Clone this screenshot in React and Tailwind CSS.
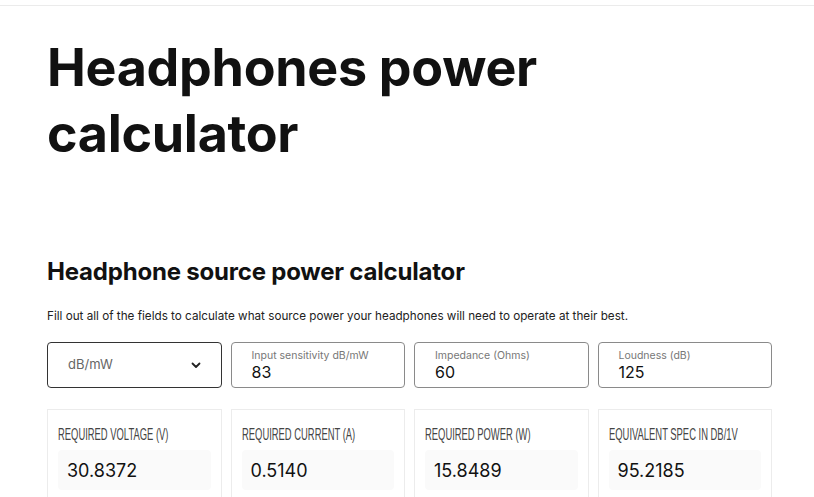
import React from "react";

const inputs = [
  { label: "Input sensitivity dB/mW", value: "83" },
  { label: "Impedance (Ohms)", value: "60" },
  { label: "Loudness (dB)", value: "125" },
];

const results = [
  { label: "REQUIRED VOLTAGE (V)", value: "30.8372" },
  { label: "REQUIRED CURRENT (A)", value: "0.5140" },
  { label: "REQUIRED POWER (W)", value: "15.8489" },
  { label: "EQUIVALENT SPEC IN DB/1V", value: "95.2185" },
];

export default function App() {
  return (
    <div className="min-h-[497px] bg-white text-[#111] font-['Inter','Noto_Sans',sans-serif]">
      <div className="h-[5px]" />
      <div className="border-t border-[#ebebeb]" />
      <div className="px-[47px] pr-[42px]">
        <h1 className="mt-[29px] text-[52px] leading-[66px] font-bold tracking-[-0.3px] text-[#111]">
          Headphones power
          <br />
          calculator
        </h1>
        <h2 className="mt-[90px] text-[24px] leading-[30px] font-bold text-[#111] tracking-[-0.2px]">
          Headphone source power calculator
        </h2>
        <p className="mt-[21px] text-[11.7px] leading-[16px] text-[#222]">
          Fill out all of the fields to calculate what source power your headphones will need to operate at their best.
        </p>
        <div className="mt-[18px] grid grid-cols-4 gap-[9px]">
          <div className="h-[46px] rounded-[4px] border border-[#333] flex items-center justify-between pl-[20px] pr-[20px]">
            <span className="text-[13px] text-[#666]">dB/mW</span>
            <svg width="10" height="7" viewBox="0 0 10 7" fill="none">
              <path d="M1.5 1.5 L5 5 L8.5 1.5" stroke="#222" strokeWidth="1.8" strokeLinecap="round" strokeLinejoin="round" />
            </svg>
          </div>
          {inputs.map((f) => (
            <div key={f.label} className="h-[46px] rounded-[4px] border border-[#8a8a8a] pl-[20px] pt-[6px] flex flex-col">
              <span className="text-[10.5px] leading-[13px] text-[#777]">{f.label}</span>
              <span className="text-[16px] leading-[20px] text-[#111]">{f.value}</span>
            </div>
          ))}
        </div>
        <div className="mt-[21px] grid grid-cols-4 gap-[9px]">
          {results.map((r) => (
            <div key={r.label} className="h-[100px] border border-[#ececec] px-[10px] pt-[15px]">
              <div className="text-[16.5px] leading-[18px] text-[#444] whitespace-nowrap origin-left scale-x-[0.57] font-['Liberation_Sans','Arial',sans-serif]">
                {r.label}
              </div>
              <div className="mt-[7px] h-[40px] rounded-[4px] bg-[#fafafa] flex items-center pl-[9px]">
                <span className="text-[18px] text-[#111]">{r.value}</span>
              </div>
            </div>
          ))}
        </div>
      </div>
    </div>
  );
}
